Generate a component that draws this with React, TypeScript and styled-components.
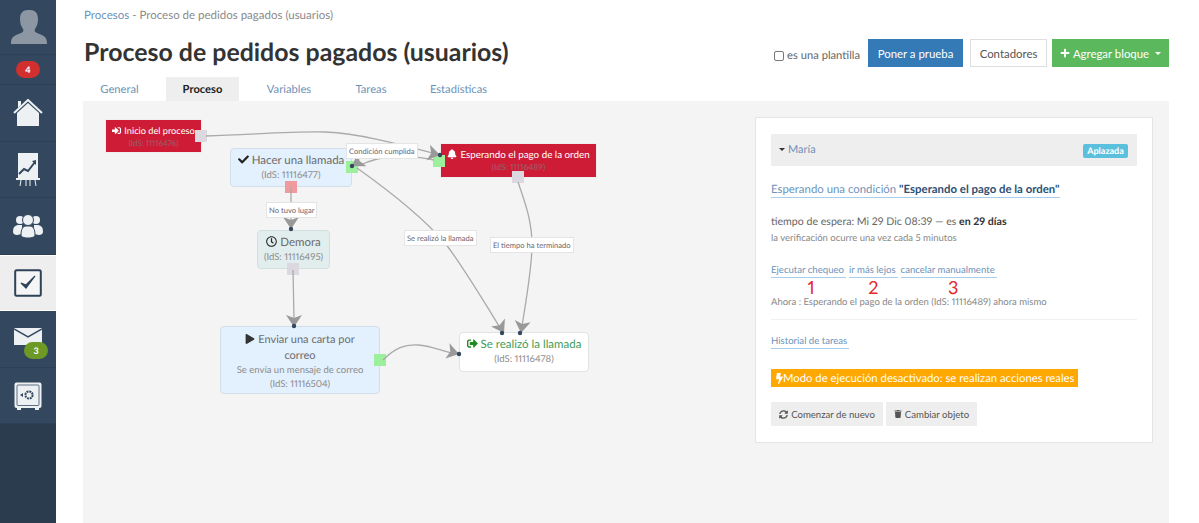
import React from "react";
import styled, { createGlobalStyle } from "styled-components";
import {
  FaBell,
  FaBolt,
  FaCheck,
  FaPlay,
  FaPlus,
  FaRegClock,
  FaSignInAlt,
  FaSignOutAlt,
  FaSyncAlt,
  FaTrash,
} from "react-icons/fa";

const GlobalStyle = createGlobalStyle`
  html, body { margin: 0; padding: 0; background: #fff; }
  body {
    font-family: "Lato", "Liberation Sans", sans-serif;
    font-feature-settings: "pnum";
    text-rendering: geometricPrecision;
    color: #555;
  }
  * { box-sizing: border-box; }
`;

const Page = styled.div`
  display: flex;
  width: 1199px;
  height: 523px;
  overflow: hidden;
`;

const Sidebar = styled.nav`
  display: flex;
  flex-direction: column;
  width: 56px;
  height: 100%;
  background: #2b3c4f;
`;

const SideItem = styled.div<{ $h: number; $active?: boolean }>`
  position: relative;
  display: flex;
  align-items: center;
  justify-content: center;
  height: ${({ $h }) => $h}px;
  background: ${({ $active }) => ($active ? "#eeeeee" : "#33485e")};
  border-bottom: 1px solid ${({ $active }) => ($active ? "#fff" : "#2d4054")};
  ${({ $active }) => $active && "border-top: 1px solid #fff;"}
`;

const Pill = styled.span<{ $green?: boolean }>`
  display: inline-flex;
  align-items: center;
  justify-content: center;
  width: 24px;
  height: 17px;
  border-radius: 9px;
  background: ${({ $green }) => ($green ? "#6d9a26" : "#d2302f")};
  color: #fff;
  font-size: 9px;
  font-weight: 700;
`;

const MailPill = styled(Pill)`
  position: absolute;
  left: 24px;
  top: 31px;
`;

const Main = styled.main`
  flex: 1;
  display: flex;
  flex-direction: column;
  padding: 0 30px 0 27px;
  min-width: 0;
`;

const Crumbs = styled.div`
  display: flex;
  gap: 3px;
  padding: 9px 0 0 1px;
  height: 37px;
  font-size: 11.5px;
  line-height: 14px;
  color: #8a8a8a;
`;

const CrumbLink = styled.span`
  color: #6d92b8;
`;

const TitleRow = styled.div`
  display: flex;
  align-items: flex-start;
  justify-content: space-between;
  height: 40px;
`;

const Title = styled.h1`
  margin: 0 0 0 1px;
  font-size: 24.9px;
  line-height: 30px;
  font-weight: 700;
  color: #333;
  white-space: nowrap;
`;

const Actions = styled.div`
  display: flex;
  align-items: flex-start;
  margin-top: 2px;
`;

const TemplateCheck = styled.label`
  display: flex;
  align-items: center;
  gap: 3px;
  margin: 10px 8px 0 0;
  font-size: 11.2px;
  color: #666;
`;

const CheckBox = styled.span`
  width: 10px;
  height: 10px;
  border: 1px solid #777;
  border-radius: 2px;
  background: #fff;
`;

const Btn = styled.button<{ $w: number; $bg: string; $fg: string; $line: string; $gap: number }>`
  display: flex;
  align-items: center;
  justify-content: center;
  gap: 3px;
  width: ${({ $w }) => $w}px;
  height: 28px;
  margin-right: ${({ $gap }) => $gap}px;
  padding: 0;
  border: 1px solid ${({ $line }) => $line};
  background: ${({ $bg }) => $bg};
  color: ${({ $fg }) => $fg};
  font: 400 11.4px "Lato", sans-serif;
`;

const Caret = styled.span<{ $c: string }>`
  display: inline-block;
  width: 0;
  height: 0;
  margin-left: 3px;
  border-left: 3px solid transparent;
  border-right: 3px solid transparent;
  border-top: 3px solid ${({ $c }) => $c};
`;

const Tabs = styled.div`
  display: flex;
  height: 24px;
`;

const Tab = styled.div<{ $w: number; $active?: boolean; $inset?: number }>`
  display: flex;
  align-items: center;
  justify-content: center;
  width: ${({ $w }) => $w}px;
  padding-right: ${({ $inset }) => $inset || 0}px;
  font-size: 11.2px;
  font-weight: ${({ $active }) => ($active ? 700 : 400)};
  color: ${({ $active }) => ($active ? "#222" : "#6d92b8")};
  background: ${({ $active }) => ($active ? "#eeeeee" : "transparent")};
`;

const Canvas = styled.section`
  flex: 1;
  display: flex;
  background: #f4f4f4;
  min-height: 0;
`;

const Diagram = styled.div`
  position: relative;
  flex: 0 0 672px;
  height: 100%;
`;

const Edges = styled.svg`
  position: absolute;
  left: 0;
  top: 0;
  z-index: 2;
  pointer-events: none;
`;

const Node = styled.div<{ $x: number; $y: number; $w: number; $h: number; $bg: string; $line: string; $round?: boolean; $top?: number }>`
  position: absolute;
  left: ${({ $x }) => $x - 83}px;
  top: ${({ $y }) => $y - 101}px;
  width: ${({ $w }) => $w}px;
  height: ${({ $h }) => $h}px;
  display: flex;
  flex-direction: column;
  align-items: center;
  justify-content: center;
  padding-top: ${({ $top }) => $top || 0}px;
  text-align: center;
  background: ${({ $bg }) => $bg};
  border: 1px solid ${({ $line }) => $line};
  border-radius: ${({ $round }) => ($round ? 4 : 0)}px;
`;

const NodeTitle = styled.div<{ $c: string; $size: number }>`
  font-size: ${({ $size }) => $size}px;
  line-height: 16px;
  color: ${({ $c }) => $c};
  white-space: nowrap;
  svg {
    vertical-align: -1px;
    margin-right: 3px;
  }
`;

const GlyphTint = styled.span<{ $c: string }>`
  color: ${({ $c }) => $c};
`;

const NodeSub = styled.div<{ $size?: number }>`
  font-size: ${({ $size }) => $size || 9.5}px;
  line-height: 14px;
  color: #8c8c8c;
  white-space: nowrap;
`;

const AlertSub = styled(NodeSub)`
  margin-top: -3px;
  color: #97606c;
`;

const Handle = styled.span<{ $x: number; $y: number; $c: string }>`
  position: absolute;
  z-index: 1;
  left: ${({ $x }) => $x - 83}px;
  top: ${({ $y }) => $y - 101}px;
  width: 12px;
  height: 12px;
  background: ${({ $c }) => $c};
`;

const EdgeLabel = styled.span<{ $x: number; $y: number }>`
  position: absolute;
  z-index: 3;
  left: ${({ $x }) => $x - 83}px;
  top: ${({ $y }) => $y - 101}px;
  padding: 0 2px;
  height: 16px;
  line-height: 14px;
  font-size: 7.6px;
  color: #6b6470;
  background: #fff;
  border: 1px solid #e4e4e4;
  white-space: nowrap;
`;

const Panel = styled.aside`
  width: 398px;
  height: 326px;
  margin-top: 16px;
  padding: 16px 15px;
  background: #fff;
  border: 1px solid #e4e4e4;
`;

const PanelHead = styled.div`
  display: flex;
  align-items: center;
  justify-content: space-between;
  height: 32px;
  padding: 0 9px 0 5px;
  background: #eeeeee;
`;

const Person = styled.span`
  display: flex;
  align-items: center;
  gap: 3px;
  margin-top: -2px;
  font-size: 11px;
  color: #6d92b8;
`;

const Status = styled.span`
  margin-top: 2px;
  width: 45px;
  height: 14px;
  line-height: 14px;
  text-align: center;
  border-radius: 2px;
  background: #5bc0de;
  color: #fff;
  font-size: 9px;
  font-weight: 700;
`;

const Condition = styled.div`
  display: inline-block;
  margin-top: 17px;
  font-size: 11.4px;
  line-height: 14px;
  color: #6d92b8;
  border-bottom: 1px solid #a9cdec;
  b {
    color: #2d4f73;
  }
`;

const WaitLine = styled.div`
  margin-top: 16px;
  font-size: 10.6px;
  line-height: 16px;
  color: #666;
  b {
    color: #333;
  }
`;

const Small = styled.div`
  margin-top: 2px;
  font-size: 9.5px;
  line-height: 14px;
  color: #888;
`;

const LinkRow = styled.div`
  display: flex;
  gap: 3px;
  margin-top: 18px;
`;

const LinkCol = styled.div`
  display: flex;
  flex-direction: column;
  align-items: center;
`;

const ActionLink = styled.span`
  padding-right: 2px;
  font-size: 9.6px;
  line-height: 13px;
  color: #6d92b8;
  border-bottom: 1px solid #a9cdec;
  white-space: nowrap;
`;

const Mark = styled.span<{ $shift: number }>`
  margin-left: ${({ $shift }) => $shift}px;
  font-size: 18px;
  line-height: 19px;
  color: #e4282b;
`;

const NowLine = styled(Small)`
  margin-top: -1px;
`;

const Rule = styled.hr`
  margin: 9px 0 15px;
  border: 0;
  border-top: 1px solid #f1f1f1;
`;

const HistoryRow = styled.div`
  display: flex;
`;

const Warning = styled.div`
  display: flex;
  align-items: center;
  width: 307px;
  height: 18px;
  margin-top: 20px;
  padding-left: 5px;
  background: #ffa800;
  color: #fff;
  font-size: 11.3px;
  white-space: nowrap;
  svg {
    margin: 0 -2px;
  }
`;

const Buttons = styled.div`
  display: flex;
  gap: 3px;
  margin-top: 15px;
`;

const GreyBtn = styled.button<{ $w: number }>`
  display: flex;
  align-items: center;
  justify-content: center;
  gap: 3px;
  width: ${({ $w }) => $w}px;
  height: 24px;
  padding: 0;
  border: 0;
  background: #eeeeee;
  color: #555;
  font: 400 9.6px "Lato", sans-serif;
`;

const ICON = "#edf1f3";

const Arrow = ({ x, y, angle }: { x: number; y: number; angle: number }) => (
  <g transform={`translate(${x} ${y}) rotate(${angle})`}>
    <path d="M0 0 L-12 -8 L-9 0 L-12 8 Z" fill="#999" />
  </g>
);

const Dot = ({ x, y }: { x: number; y: number }) => <circle cx={x} cy={y} r={2.2} fill="#34495e" />;

const Line = ({ d }: { d: string }) => <path d={d} fill="none" stroke="#aaa" strokeWidth={1.3} />;

const App = () => {
  return (
    <Page>
      <GlobalStyle />
      <Sidebar>
        <SideItem $h={55}>
          <svg width="38" height="36" viewBox="0 0 38 36">
            <path
              d="M19 1c-5 0-8 3-8 9 0 4 1 7 3 10 1 2 0 3-2 4-5 2-10 3-10 10v1h36v-1c0-7-5-8-10-10-2-1-3-2-2-4 2-3 3-6 3-10 0-6-3-9-8-9z"
              fill="#8c97a3"
            />
          </svg>
        </SideItem>
        <SideItem $h={30}>
          <Pill>4</Pill>
        </SideItem>
        <SideItem $h={57}>
          <svg width="30" height="28" viewBox="0 0 30 28">
            <path d="M15 4 L4 14 V27 H26 V14 Z" fill={ICON} />
            <path d="M1 14 L15 1 L29 14" fill="none" stroke={ICON} strokeWidth="2" />
            <path d="M5 2 H8 V6 L5 9 Z" fill={ICON} />
          </svg>
        </SideItem>
        <SideItem $h={56}>
          <svg width="24" height="34" viewBox="0 0 24 34">
            <rect x="2" y="0" width="20" height="25" fill={ICON} />
            <path d="M3 21 L8 16 L12 18 L19 9" fill="none" stroke="#33485e" strokeWidth="2" />
            <path d="M16 8 L20 7 L20 12 Z" fill="#33485e" />
            <rect x="0" y="25" width="24" height="2" fill={ICON} />
            <path d="M5 27 L4 33 M10 27 V33 M14 27 V33 M19 27 L20 33" stroke={ICON} strokeWidth="1" />
          </svg>
        </SideItem>
        <SideItem $h={57}>
          <svg width="30" height="24" viewBox="0 0 30 24">
            <circle cx="7" cy="6" r="4" fill={ICON} />
            <circle cx="23" cy="6" r="4" fill={ICON} />
            <path d="M0 18c0-5 2-7 6-7h3v9l-5 1c-2 0-4-1-4-3zM30 18c0-5-2-7-6-7h-3v9l5 1c2 0 4-1 4-3z" fill={ICON} />
            <circle cx="15" cy="6" r="5.5" fill={ICON} stroke="#33485e" />
            <path d="M8 21c0-6 2-9 5-9h4c3 0 5 3 5 9 0 2-3 3-7 3s-7-1-7-3z" fill={ICON} stroke="#33485e" />
          </svg>
        </SideItem>
        <SideItem $h={56} $active>
          <svg width="28" height="28" viewBox="0 0 28 28">
            <rect x="1.2" y="1.2" width="25.6" height="25.6" rx="1.5" fill="#f5f5f5" stroke="#2f4358" strokeWidth="2" />
            <path d="M7 14 L12 19 L21 7 L12 16 Z" fill="#2f4358" stroke="#2f4358" strokeWidth="1.2" />
          </svg>
        </SideItem>
        <SideItem $h={57}>
          <svg width="28" height="17" viewBox="0 0 28 17" style={{ marginTop: -6 }}>
            <rect width="28" height="17" fill={ICON} />
            <path d="M0 1 L14 9 L28 1" fill="none" stroke="#33485e" strokeWidth="1.5" />
          </svg>
          <MailPill $green>3</MailPill>
        </SideItem>
        <SideItem $h={56}>
          <svg width="28" height="28" viewBox="0 0 28 28">
            <rect x="0.5" y="0.5" width="27" height="25.5" rx="2" fill={ICON} />
            <rect x="3" y="3" width="22" height="20.5" rx="1" fill="none" stroke="#5d6f81" />
            <circle cx="15" cy="13" r="3.6" fill="none" stroke="#33485e" strokeWidth="2" strokeDasharray="2 0.8" />
            <path d="M6 13 L9 11 V15 Z" fill="#33485e" />
            <rect x="3" y="26" width="4" height="2" fill={ICON} />
            <rect x="21" y="26" width="4" height="2" fill={ICON} />
          </svg>
        </SideItem>
      </Sidebar>
      <Main>
        <Crumbs>
          <span>
            <CrumbLink>Procesos</CrumbLink> -
          </span>
          <span>Proceso de pedidos pagados (usuarios)</span>
        </Crumbs>
        <TitleRow>
          <Title>Proceso de pedidos pagados (usuarios)</Title>
          <Actions>
            <TemplateCheck>
              <CheckBox />
              es una plantilla
            </TemplateCheck>
            <Btn $w={95} $gap={7} $bg="#337ab7" $fg="#fff" $line="#337ab7">
              Poner a prueba
            </Btn>
            <Btn $w={77} $gap={5} $bg="#fff" $fg="#555" $line="#dedede">
              Contadores
            </Btn>
            <Btn $w={117} $gap={0} $bg="#5cb85c" $fg="#fff" $line="#5cb85c">
              <FaPlus size={10} />
              Agregar bloque
              <Caret $c="#fff" />
            </Btn>
          </Actions>
        </TitleRow>
        <Tabs>
          <Tab $w={83} $inset={10}>General</Tab>
          <Tab $w={73} $active>
            Proceso
          </Tab>
          <Tab $w={100}>Variables</Tab>
          <Tab $w={64}>Tareas</Tab>
          <Tab $w={111}>Estadísticas</Tab>
        </Tabs>
        <Canvas>
          <Diagram>
            <Node $x={105} $y={119} $w={97} $h={34} $bg="#cf1c36" $line="#eee">
              <NodeTitle $c="#fff" $size={9.2}>
                <FaSignInAlt size={9} />
                Inicio del proceso
              </NodeTitle>
              <AlertSub $size={8}>(IdS: 11116476)</AlertSub>
            </Node>
            <Node $x={230} $y={148} $w={122} $h={39} $bg="#e3f0fd" $line="#d2dfe9" $round>
              <NodeTitle $c="#6b6b6b" $size={11.5}>
                <GlyphTint $c="#222">
                  <FaCheck size={11} />
                </GlyphTint>
                Hacer una llamada
              </NodeTitle>
              <NodeSub>(IdS: 11116477)</NodeSub>
            </Node>
            <Node $x={257} $y={230} $w={73} $h={39} $bg="#e2eeee" $line="#d2dfdf" $round>
              <NodeTitle $c="#6b6b6b" $size={11.5}>
                <GlyphTint $c="#222">
                  <FaRegClock size={11} />
                </GlyphTint>
                Demora
              </NodeTitle>
              <NodeSub>(IdS: 11116495)</NodeSub>
            </Node>
            <Node $x={220} $y={326} $w={160} $h={68} $bg="#e3f0fd" $line="#d2dfe9" $round $top={4}>
              <NodeTitle $c="#6b6b6b" $size={11}>
                <GlyphTint $c="#333">
                  <FaPlay size={10} />
                </GlyphTint>
                Enviar una carta por
                <br />
                correo
              </NodeTitle>
              <NodeSub>Se envía un mensaje de correo</NodeSub>
              <NodeSub>(IdS: 11116504)</NodeSub>
            </Node>
            <Node $x={459} $y={332} $w={130} $h={40} $bg="#fff" $line="#e2e2e2" $round>
              <NodeTitle $c="#3f9b58" $size={11.5}>
                <GlyphTint $c="#1c8a1c">
                  <FaSignOutAlt size={11} />
                </GlyphTint>
                Se realizó la llamada
              </NodeTitle>
              <NodeSub>(IdS: 11116478)</NodeSub>
            </Node>
            <Node $x={440} $y={143} $w={157} $h={35} $bg="#cf1c36" $line="#eee">
              <NodeTitle $c="#fff" $size={9.8}>
                <FaBell size={10} />
                Esperando el pago de la orden
              </NodeTitle>
              <AlertSub $size={8.5}>(IdS: 11116489)</AlertSub>
            </Node>

            <Handle $x={195} $y={130} $c="#dcd8e0" />
            <Handle $x={346} $y={161} $c="#9cf09c" />
            <Handle $x={285} $y={181} $c="#f09a9f" />
            <Handle $x={287} $y={263} $c="#dcd8e0" />
            <Handle $x={374} $y={354} $c="#9cf09c" />
            <Handle $x={433} $y={155} $c="#9cf09c" />
            <Handle $x={512} $y={171} $c="#dcd8e0" />

            <Edges width="672" height="422" viewBox="83 101 672 422">
              <Line d="M206 136 C 260 134, 300 131, 325 132 C 365 134, 405 146, 432 153" />
              <Line d="M358 166 C 385 153, 410 155, 434 160" />
              <Line d="M357 168 C 395 195, 425 220, 445 243 C 462 265, 480 295, 499 326" />
              <Line d="M291 187 L291 224" />
              <Line d="M293 270 L294 320" />
              <Line d="M383 360 C 395 348, 405 344, 418 345 C 430 346, 440 350, 452 353" />
              <Line d="M518 182 C 526 205, 532 222, 532 245 C 532 265, 528 290, 522 326" />
              <Arrow x={440} y={155} angle={12} />
              <Arrow x={352} y={166} angle={147} />
              <Arrow x={291} y={229} angle={90} />
              <Arrow x={294} y={327} angle={90} />
              <Arrow x={459} y={354} angle={15} />
              <Arrow x={504} y={333} angle={60} />
              <Arrow x={521} y={333} angle={98} />
              <Dot x={440} y={155} />
              <Dot x={352} y={166} />
              <Dot x={291} y={229} />
              <Dot x={294} y={326} />
              <Dot x={459} y={354} />
              <Dot x={502} y={333} />
              <Dot x={520} y={333} />
            </Edges>

            <EdgeLabel $x={346} $y={143}>Condición cumplida</EdgeLabel>
            <EdgeLabel $x={266} $y={202}>No tuvo lugar</EdgeLabel>
            <EdgeLabel $x={404} $y={230}>Se realizó la llamada</EdgeLabel>
            <EdgeLabel $x={490} $y={237}>El tiempo ha terminado</EdgeLabel>
          </Diagram>
          <Panel>
            <PanelHead>
              <Person>
                <Caret $c="#333" />
                María
              </Person>
              <Status>Aplazada</Status>
            </PanelHead>
            <Condition>
              Esperando una condición <b>"Esperando el pago de la orden"</b>
            </Condition>
            <WaitLine>
              tiempo de espera: Mi 29 Dic 08:39 — es <b>en 29 días</b>
            </WaitLine>
            <Small>la verificación ocurre una vez cada 5 minutos</Small>
            <LinkRow>
              <LinkCol>
                <ActionLink>Ejecutar chequeo</ActionLink>
                <Mark $shift={5}>1</Mark>
              </LinkCol>
              <LinkCol>
                <ActionLink>ir más lejos</ActionLink>
                <Mark $shift={0}>2</Mark>
              </LinkCol>
              <LinkCol>
                <ActionLink>cancelar manualmente</ActionLink>
                <Mark $shift={9}>3</Mark>
              </LinkCol>
            </LinkRow>
            <NowLine>Ahora : Esperando el pago de la orden (IdS: 11116489) ahora mismo</NowLine>
            <Rule />
            <HistoryRow>
              <ActionLink>Historial de tareas</ActionLink>
            </HistoryRow>
            <Warning>
              <FaBolt size={11} />
              Modo de ejecución desactivado: se realizan acciones reales
            </Warning>
            <Buttons>
              <GreyBtn $w={112}>
                <FaSyncAlt size={9} />
                Comenzar de nuevo
              </GreyBtn>
              <GreyBtn $w={91}>
                <FaTrash size={8} />
                Cambiar objeto
              </GreyBtn>
            </Buttons>
          </Panel>
        </Canvas>
      </Main>
    </Page>
  );
};

export default App;
